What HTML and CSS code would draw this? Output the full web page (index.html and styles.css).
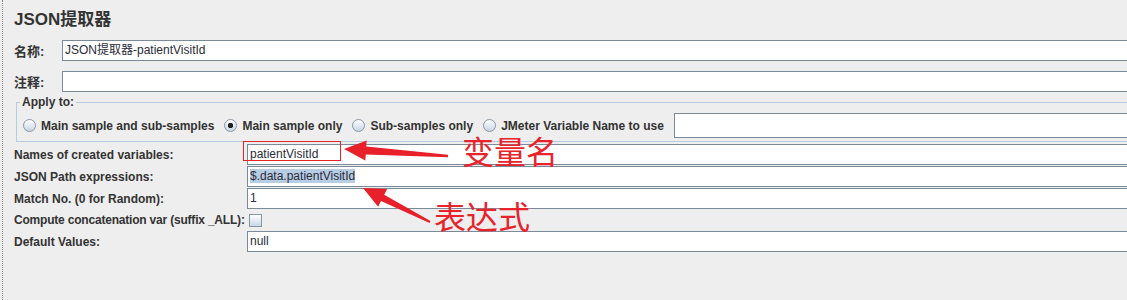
FILE: index.html
```html
<!DOCTYPE html>
<html lang="zh">
<head>
<meta charset="utf-8">
<title>JSON提取器</title>
<link rel="stylesheet" href="styles.css">
</head>
<body>
<div class="page">
  <h1 class="title">JSON提取器</h1>
  <div class="row-top">
    <label class="lbl-cn">名称:</label>
    <div class="field">JSON提取器-patientVisitId</div>
  </div>
  <div class="row-top second">
    <label class="lbl-cn">注释:</label>
    <div class="field"></div>
  </div>
  <fieldset class="apply">
    <legend>Apply to:</legend>
    <div class="radios">
      <span class="opt"><span class="radio"></span>Main sample and sub-samples</span>
      <span class="opt"><span class="radio on"></span>Main sample only</span>
      <span class="opt"><span class="radio"></span>Sub-samples only</span>
      <span class="opt"><span class="radio"></span>JMeter Variable Name to use</span>
      <div class="field var-field"></div>
    </div>
  </fieldset>
  <div class="grid">
    <label class="lbl">Names of created variables:</label>
    <div class="field marked">patientVisitId<span class="mark"></span></div>
    <label class="lbl">JSON Path expressions:</label>
    <div class="field"><span class="sel">$.data.patientVisitId</span></div>
    <label class="lbl">Match No. (0 for Random):</label>
    <div class="field">1</div>
    <div class="check-row">
      <label class="lbl tight">Compute concatenation var (suffix _ALL):</label>
      <span class="checkbox"></span>
    </div>
    <label class="lbl">Default Values:</label>
    <div class="field">null</div>
  </div>
</div>
<svg class="arrows" width="1127" height="300" viewBox="0 0 1127 300">
  <polygon fill="#e8202a" points="344,149 366.7,140.5 366.2,146.5 448,154.8 448,157.2 365.8,154.5 365.3,160.5"/>
  <polygon fill="#e8202a" points="363,188 387.1,189 384.2,194.8 430.5,221.1 429.6,222.9 381,201 378.1,206.8"/>
</svg>
<span class="note note1">变量名</span>
<span class="note note2">表达式</span>
</body>
</html>
```

FILE: styles.css
```css
html, body {
  margin: 0;
  height: 300px;
  overflow: hidden;
  background: #eeeeee;
}

body {
  position: relative;
  font-family: "Liberation Sans", "Noto Sans CJK SC", sans-serif;
  color: #333333;
}

.page {
  margin-left: 2px;
  border-left: 1px dotted #8a8a8a;
  padding-left: 11px;
  width: 1200px;
  height: 300px;
  box-sizing: border-box;
  display: flex;
  flex-direction: column;
}

.title {
  margin: 5px 0 0;
  height: 30px;
  line-height: 30px;
  font-size: 17px;
  font-weight: bold;
  color: #333333;
}

.row-top {
  display: flex;
  align-items: center;
  margin-top: 5px;
}

.row-top.second {
  margin-top: 10px;
}

.lbl-cn {
  flex: none;
  width: 48px;
  font-size: 13px;
  font-weight: bold;
}

.field {
  flex: 1;
  height: 21px;
  box-sizing: border-box;
  border: 1px solid #7a8a99;
  background: #ffffff;
  font-family: "Liberation Sans", "Noto Sans CJK SC", sans-serif;
  font-size: 12px;
  line-height: 19px;
  padding: 0 2px;
  white-space: nowrap;
  color: #2b2b3a;
}

.apply {
  margin: 3px 0 0 2px;
  padding: 4px 0 3px 3px;
  border: 1px solid #b4cbe2;
  min-width: 0;
}

.apply legend {
  padding: 0 2px;
  font-size: 12px;
  font-weight: bold;
  line-height: 14px;
}

.radios {
  display: flex;
  align-items: center;
  height: 25px;
  padding-left: 3px;
  gap: 10px;
}

.opt {
  display: flex;
  align-items: center;
  font-size: 12px;
  font-weight: bold;
  white-space: nowrap;
}

.radio {
  flex: none;
  width: 13px;
  height: 13px;
  border-radius: 50%;
  border: 1px solid #8796a6;
  box-sizing: border-box;
  background: linear-gradient(#ffffff, #c8d5e3);
  margin-right: 5px;
}

.radio.on {
  background: radial-gradient(circle, #222222 0 2.4px, transparent 3px), linear-gradient(#ffffff, #c8d5e3);
}

.var-field {
  height: 25px;
}

.grid {
  display: grid;
  grid-template-columns: 233px 1fr;
  row-gap: 1px;
  margin-top: 2px;
  align-items: center;
}

.lbl {
  font-size: 12px;
  font-weight: bold;
  white-space: nowrap;
}

.lbl.tight {
  letter-spacing: -0.2px;
}

.check-row {
  grid-column: 1 / -1;
  height: 20px;
  display: flex;
  align-items: center;
  gap: 4px;
}

.checkbox {
  width: 13px;
  height: 13px;
  box-sizing: border-box;
  border: 1px solid #8495a6;
  background: linear-gradient(#ffffff, #cbd7e4);
}

.marked {
  position: relative;
}

.mark {
  position: absolute;
  left: -5px;
  top: -4px;
  width: 98px;
  height: 20px;
  box-sizing: border-box;
  border: 1px solid #e3242b;
}

.sel {
  background: #b7cde4;
}

.arrows {
  position: absolute;
  left: 0;
  top: 0;
  pointer-events: none;
}

.note {
  position: absolute;
  color: #e8232b;
  font-family: "Noto Sans CJK SC", sans-serif;
  font-size: 32px;
  line-height: 32px;
  font-weight: 400;
  white-space: nowrap;
}

.note1 {
  left: 462px;
  top: 134px;
}

.note2 {
  left: 434px;
  top: 199px;
}
```
